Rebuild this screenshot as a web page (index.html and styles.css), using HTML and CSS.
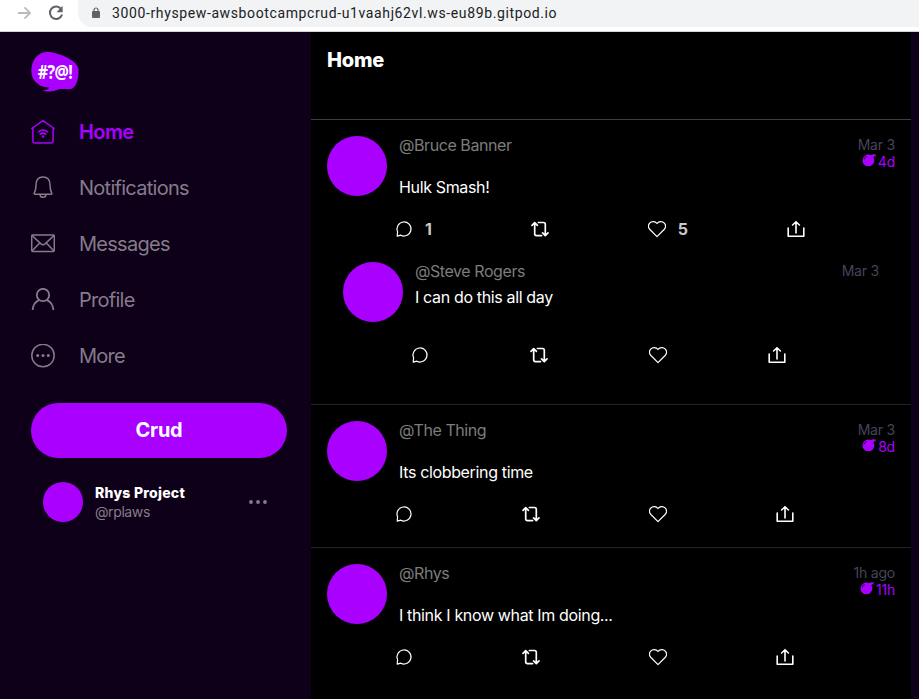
FILE: index.html
```html
<!DOCTYPE html>
<html lang="en">
<head>
<meta charset="utf-8">
<title>Home</title>
<link rel="stylesheet" href="styles.css">
</head>
<body>
<svg class="defs" aria-hidden="true">
  <symbol id="chat" viewBox="0 0 18 18"><path d="M2.2 16.2 2.6 11.8A7 7 0 1 1 5.8 15.2L2.2 16.2Z" fill="none" stroke="currentColor" stroke-width="1.2" stroke-linejoin="round"/></symbol>
  <symbol id="repost" viewBox="0 0 18 18"><path d="M1 5.3 3.7 2.6 6.4 5.3M3.7 3V14Q3.7 15.600 5.500 15.600H10.600M7.400 2.500H12.500Q14.300 2.500 14.300 4.200V15M11.600 12.900 14.300 15.600 17 12.900" fill="none" stroke="currentColor" stroke-width="1.700" stroke-linecap="round" stroke-linejoin="round"/></symbol>
  <symbol id="heart" viewBox="0 0 18 18"><path d="M9 16.600 1.900 9.500C.400 7.800.100 5 1.700 3.100 3.600.900 7.200 1 9 3.500 10.800 1 14.400.900 16.300 3.100 17.900 5 17.600 7.800 16.100 9.500Z" fill="none" stroke="currentColor" stroke-width="1.200" stroke-linejoin="round"/></symbol>
  <symbol id="share" viewBox="0 0 18 18"><path d="M1.200 8V16.200H16.800V8M9 13V2M5.600 5 9 1.700 12.400 5" fill="none" stroke="currentColor" stroke-width="1.600" stroke-linecap="round" stroke-linejoin="round"/></symbol>
  <symbol id="bomb" viewBox="0 0 14 12"><path d="M8.600 1.100 10 .9 11 .1 12 .5 14 .2 13.400 1.500 13.800 2.500 12.300 2.300 11.400 3.500A5.900 5.900 0 1 1 8.600 1.100Z" fill="currentColor"/><path d="M2 5.600Q2.600 3.200 4.700 2.500" fill="none" stroke="#000" stroke-width=".7"/></symbol>
</svg>

<header class="browser">
  <svg class="forward" viewBox="0 0 16 14"><path d="M1 7H14M8 1 14 7 8 13" fill="none" stroke="currentColor" stroke-width="1.900"/></svg>
  <svg class="reload" viewBox="0 0 16 16"><path d="M13.300 4.200A6.200 6.200 0 1 0 14.100 9.500" fill="none" stroke="currentColor" stroke-width="2"/><path d="M14.600.800V7.200H8.500Z" fill="currentColor"/></svg>
  <div class="address">
    <svg class="lock" viewBox="0 0 8 11"><path d="M2 5V3A2 2 0 0 1 6 3V5" fill="none" stroke="currentColor" stroke-width="1.200"/><rect y="4" width="8" height="7" rx="1" fill="currentColor"/></svg>
    <span class="url">3000-rhyspew-awsbootcampcrud-u1vaahj62vl.ws-eu89b.gitpod.io</span>
  </div>
</header>

<div class="app">
  <nav class="sidebar">
    <div class="logo">
      <svg class="logo-shape" viewBox="0 0 48 40"><path d="M16 0C27 0 46 8 47.500 17 48 25 46 35 40 37 35 37.500 31 36.500 27 37.500 21 40 16 40 11.500 38.500 15 38 18 37 19 35.500 10 36 1 30 .300 20 0 8 7 0 16 0Z" fill="currentColor"/></svg>
      <span class="logo-text">#?@!</span>
    </div>
    <a class="item active"><svg viewBox="0 0 24 24"><path d="M.800 8.500 12 .700 23.200 8.500M1.900 8V21Q1.900 23 4 23H20Q22.100 23 22.100 21V8M7.400 12Q12 8 16.600 12M9.200 14.300Q12 12 14.800 14.300" fill="none" stroke="currentColor" stroke-width="1.500" stroke-linecap="round"/><circle cx="12" cy="16.500" r="1.200" fill="currentColor"/></svg><span>Home</span></a>
    <a class="item"><svg viewBox="0 0 24 24"><path d="M5 9C5 4 7.500 1 12 1S19 4 19 9C19 13 19.500 15 20.800 17.300Q20.900 18.200 20 18.200H4Q3.100 18.200 3.200 17.300C4.500 15 5 13 5 9ZM9 18.200Q9 21.300 12 21.300T15 18.200" fill="none" stroke="currentColor" stroke-width="1.500"/></svg><span>Notifications</span></a>
    <a class="item"><svg viewBox="0 0 24 24"><rect x=".700" y="3" width="22.600" height="16.400" rx="1.200" fill="none" stroke="currentColor" stroke-width="1.500"/><path d="M1 3.500 10 11.900Q12 13.400 14 11.900L23 3.500M1 19 8.700 11M23 19 15.300 11" fill="none" stroke="currentColor" stroke-width="1.500"/></svg><span>Messages</span></a>
    <a class="item"><svg viewBox="0 0 24 24"><circle cx="12" cy="7" r="6.200" fill="none" stroke="currentColor" stroke-width="1.800"/><path d="M1.600 22C1.900 17.400 4.500 13.700 8 12.100M22.400 22C22.100 17.400 19.500 13.700 16 12.100" fill="none" stroke="currentColor" stroke-width="1.800"/></svg><span>Profile</span></a>
    <a class="item"><svg viewBox="0 0 24 24"><circle cx="12" cy="11.500" r="11.200" fill="none" stroke="currentColor" stroke-width="1.500"/><circle cx="6.700" cy="11.500" r="1.500" fill="currentColor"/><circle cx="12" cy="11.500" r="1.500" fill="currentColor"/><circle cx="17.300" cy="11.500" r="1.500" fill="currentColor"/></svg><span>More</span></a>
    <button class="crud">Crud</button>
    <div class="profile">
      <div class="avatar small"></div>
      <div class="who"><strong>Rhys Project</strong><span>@rplaws</span></div>
      <svg class="dots" viewBox="0 0 18 4"><circle cx="2" cy="2" r="1.900" fill="currentColor"/><circle cx="9" cy="2" r="1.900" fill="currentColor"/><circle cx="16" cy="2" r="1.900" fill="currentColor"/></svg>
    </div>
  </nav>

  <main class="feed">
    <h1>Home</h1>
    <article class="post first">
      <div class="row">
        <div class="avatar"></div>
        <div class="body">
          <div class="head"><span class="handle">@Bruce Banner</span><div class="meta"><span>Mar 3</span><span class="expires"><svg viewBox="0 0 14 12"><use href="#bomb"/></svg>4d</span></div></div>
          <p class="message">Hulk Smash!</p>
          <div class="actions counted">
            <span class="action"><svg><use href="#chat"/></svg><b>1</b></span>
            <span class="action"><svg><use href="#repost"/></svg></span>
            <span class="action"><svg><use href="#heart"/></svg><b>5</b></span>
            <span class="action"><svg><use href="#share"/></svg></span>
          </div>
        </div>
      </div>
      <div class="row reply">
        <div class="avatar"></div>
        <div class="body">
          <div class="head"><span class="handle">@Steve Rogers</span><div class="meta"><span>Mar 3</span></div></div>
          <p class="message">I can do this all day</p>
          <div class="actions">
            <span class="action"><svg><use href="#chat"/></svg></span>
            <span class="action"><svg><use href="#repost"/></svg></span>
            <span class="action"><svg><use href="#heart"/></svg></span>
            <span class="action"><svg><use href="#share"/></svg></span>
          </div>
        </div>
      </div>
    </article>
    <article class="post">
      <div class="row">
        <div class="avatar"></div>
        <div class="body">
          <div class="head"><span class="handle">@The Thing</span><div class="meta"><span>Mar 3</span><span class="expires"><svg viewBox="0 0 14 12"><use href="#bomb"/></svg>8d</span></div></div>
          <p class="message">Its clobbering time</p>
          <div class="actions">
            <span class="action"><svg><use href="#chat"/></svg></span>
            <span class="action"><svg><use href="#repost"/></svg></span>
            <span class="action"><svg><use href="#heart"/></svg></span>
            <span class="action"><svg><use href="#share"/></svg></span>
          </div>
        </div>
      </div>
    </article>
    <article class="post">
      <div class="row">
        <div class="avatar"></div>
        <div class="body">
          <div class="head"><span class="handle">@Rhys</span><div class="meta"><span>1h ago</span><span class="expires"><svg viewBox="0 0 14 12"><use href="#bomb"/></svg>11h</span></div></div>
          <p class="message">I think I know what Im doing...</p>
          <div class="actions">
            <span class="action"><svg><use href="#chat"/></svg></span>
            <span class="action"><svg><use href="#repost"/></svg></span>
            <span class="action"><svg><use href="#heart"/></svg></span>
            <span class="action"><svg><use href="#share"/></svg></span>
          </div>
        </div>
      </div>
    </article>
  </main>
</div>
</body>
</html>
```
FILE: styles.css
```css
* { box-sizing: border-box; }
body {
  margin: 0;
  height: 699px;
  overflow: hidden;
  background: #0f0019;
  font-family: Inter, "Liberation Sans", sans-serif;
  display: flex;
  flex-direction: column;
}
svg { display: block; flex: none; }
.defs { display: none; }

.browser {
  height: 32px;
  flex: none;
  background: #fff;
  border-bottom: 1px solid #d5d5d8;
  display: flex;
  padding-left: 17px;
}
.forward { width: 15px; height: 14px; margin-top: 6px; color: #babcbe; }
.reload { width: 16px; height: 16px; margin: 5px 0 0 16px; color: #5f6368; }
.address {
  margin-left: 14px;
  flex: 1;
  height: 27px;
  background: #f1f3f4;
  border-radius: 0 0 0 14px;
  display: flex;
  padding-left: 14px;
}
.lock { width: 8px; height: 11px; margin-top: 7px; color: #5f6368; }
.url {
  margin-left: 12px;
  font: 14px/26px Roboto, sans-serif;
  letter-spacing: 0.62px;
  color: #202124;
  white-space: nowrap;
}

.app { flex: 1; display: flex; min-height: 0; }
.sidebar { width: 311px; padding: 20px 24px 0 31px; }
.logo {
  width: 48px;
  height: 40px;
  display: grid;
  margin-bottom: 12px;
  color: #a0f;
}
.logo > * { grid-area: 1 / 1; }
.logo-shape { width: 48px; height: 40px; }
.logo-text {
  color: #fff;
  font: bold 16px/40px "Open Sans", sans-serif;
  letter-spacing: -0.6px;
  text-align: center;
  transform: scaleY(1.2);
}
.item {
  height: 56px;
  display: flex;
  align-items: center;
  gap: 24px;
  color: #857c8a;
  font-size: 20px;
  letter-spacing: -0.73px;
}
.item svg { width: 24px; height: 24px; }
.item.active { color: #a0f; font-weight: 600; letter-spacing: -0.6px; }
.crud {
  display: block;
  width: 256px;
  height: 55px;
  margin-top: 19px;
  padding: 0 0 2px;
  border: 0;
  border-radius: 28px;
  background: #a0f;
  color: #fff;
  font: 700 20px Inter, sans-serif;
  letter-spacing: -0.3px;
}
.avatar { width: 60px; height: 60px; flex: none; border-radius: 50%; background: #a0f; }
.avatar.small { width: 40px; height: 40px; }
.profile { display: flex; align-items: center; padding: 24px 20px 0 12px; gap: 12px; }
.who { flex: 1; display: flex; flex-direction: column; font-size: 14px; line-height: 19px; }
.who strong { color: #fff; font-weight: 800; letter-spacing: 0.25px; }
.who span { color: #857c8a; letter-spacing: -0.4px; }
.dots { width: 18px; height: 4px; color: #857c8a; }

.feed { width: 600px; background: #000; }
h1 {
  margin: 0;
  height: 87px;
  padding: 16px;
  color: #fff;
  font-size: 20px;
  line-height: 24px;
  font-weight: 800;
  letter-spacing: -0.2px;
}
.post { border-top: 1px solid #20232f; padding: 16px; }
.post.first { border-top-color: #3f3d4a; }
.row { display: flex; gap: 12px; }
.body { flex: 1; }
.head { height: 42px; display: flex; justify-content: space-between; }
.handle { color: #7c7c7c; font-size: 16px; line-height: 18px; letter-spacing: -0.43px; }
.meta {
  display: flex;
  flex-direction: column;
  align-items: flex-end;
  color: #45445a;
  font-size: 14px;
  line-height: 17px;
  letter-spacing: -0.2px;
}
.expires { color: #a0f; display: flex; gap: 2px; }
.expires svg { width: 14px; height: 12px; margin-top: 1px; }
.message { margin: 0; color: #fff; font-size: 16px; line-height: 18px; letter-spacing: -0.35px; }
.actions {
  width: 399px;
  height: 18px;
  margin: 24px 0 24px -4px;
  display: flex;
  justify-content: space-between;
  color: #fff;
}
.post > .row:last-child .actions { margin-bottom: 8px; }
.actions.counted { width: 410px; }
.action { display: flex; gap: 12px; }
.action svg { width: 18px; height: 18px; }
.action b { color: #c8c8c8; font-size: 16px; line-height: 18px; font-weight: 700; }
.reply { padding: 0 16px; }
.reply .head { height: 26px; }
.reply .actions { width: 375px; margin-top: 40px; }
.post > .reply:last-child .actions { margin-bottom: 24px; }
```
